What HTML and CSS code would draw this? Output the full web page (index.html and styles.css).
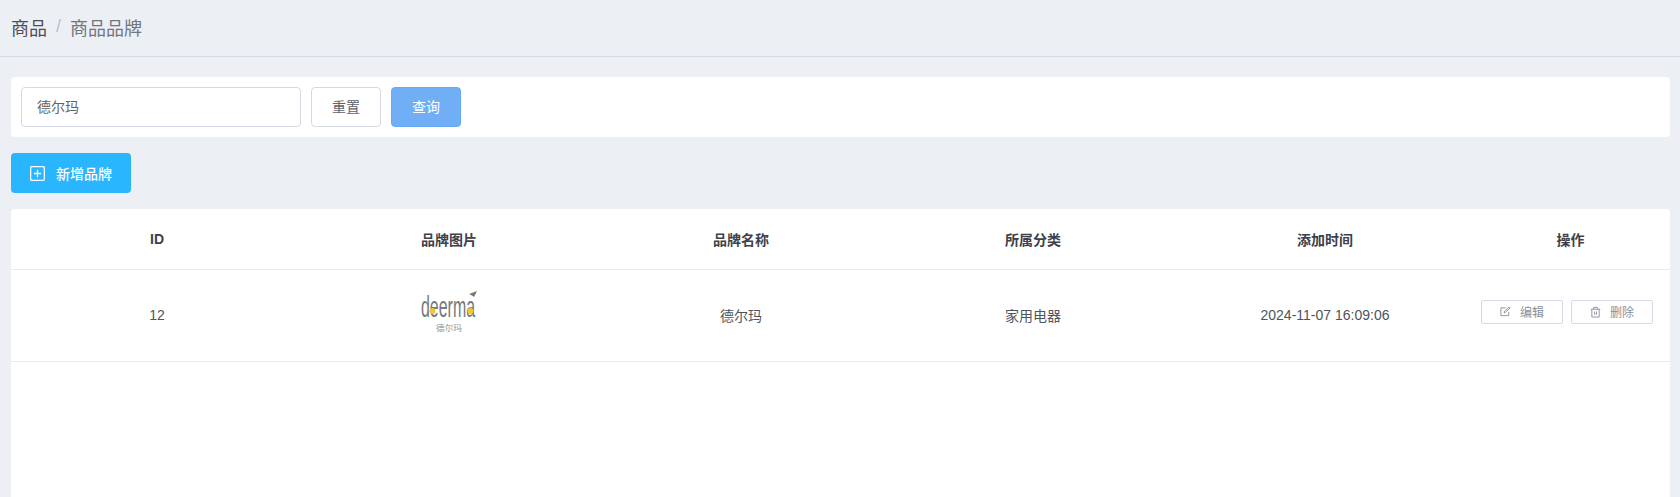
FILE: index.html
```html
<!DOCTYPE html>
<html lang="zh">
<head>
<meta charset="utf-8">
<title>商品品牌</title>
<link rel="stylesheet" href="styles.css">
</head>
<body>
<header class="crumbs">
  <span class="crumb-root">商品</span>
  <span class="crumb-sep">/</span>
  <span class="crumb-leaf">商品品牌</span>
</header>
<main class="content">
  <section class="card search">
    <div class="input">德尔玛</div>
    <button class="btn">重置</button>
    <button class="btn btn-query">查询</button>
  </section>
  <div class="toolbar">
    <button class="btn-add">
      <svg class="add-icon" viewBox="0 0 14 14" width="15" height="15" fill="none" stroke="#fff" stroke-width="1.2"><rect x="0.6" y="0.6" width="12.8" height="12.8" rx="1"/><path d="M7 3.600v6.800M3.600 7h6.800"/></svg>
      <span>新增品牌</span>
    </button>
  </div>
  <section class="card table-card">
    <div class="row head">
      <div>ID</div><div>品牌图片</div><div>品牌名称</div><div>所属分类</div><div>添加时间</div><div>操作</div>
    </div>
    <div class="row body">
      <div>12</div>
      <div class="logo-cell">
        <svg class="logo" viewBox="0 0 60 44" width="60" height="44">
          <path d="M50 5l8-3-3 6-2-1.500z" fill="#777"/>
          <text x="2" y="28" class="logo-word" textLength="54" lengthAdjust="spacingAndGlyphs">deerma</text>
          <circle cx="13.500" cy="22" r="3" fill="#f2c62f"/>
          <circle cx="51.500" cy="22" r="3" fill="#f2c62f"/>
          <text x="17" y="42" class="logo-cn" textLength="26" lengthAdjust="spacingAndGlyphs">德尔玛</text>
        </svg>
      </div>
      <div>德尔玛</div>
      <div>家用电器</div>
      <div>2024-11-07 16:09:06</div>
      <div class="actions">
        <button class="btn-mini">
          <svg viewBox="0 0 12 12" width="11" height="11" fill="none" stroke="#8a8f99" stroke-width="1"><path d="M9.500 6.500v4h-8.500v-8.500h5"/><path d="M4.500 7.500l.5-2 5-4.500 1 1-5 5z"/></svg>
          <span>编辑</span>
        </button>
        <button class="btn-mini">
          <svg viewBox="0 0 12 12" width="11" height="12" fill="none" stroke="#8a8f99" stroke-width="1"><path d="M2 3v8.500h8v-8.500M.8 3h10.400M4 3v-2h4v2M5 5.500v3.500M7 5.500v3.500"/></svg>
          <span>删除</span>
        </button>
      </div>
    </div>
  </section>
</main>
</body>
</html>
```
FILE: styles.css
```css
* { box-sizing: border-box; }
html, body { height: 100%; }
body {
  margin: 0;
  background: #eceff4;
  color: #484c55;
  font-family: "Liberation Sans", "Noto Sans CJK SC", sans-serif;
  font-size: 14px;
  overflow: hidden;
}
button { font-family: inherit; cursor: pointer; }

.crumbs {
  height: 57px;
  padding: 0 11px 3px;
  display: flex;
  align-items: center;
  border-bottom: 1px solid #d5d9e6;
  font-size: 18px;
}
.crumb-root { color: #4a4e57; }
.crumb-sep { margin: 0 9px; color: #b9c0d2; font-size: 18px; }
.crumb-leaf { color: #71757d; }

.content { padding: 20px 10px 0 11px; }
.card { background: #fff; border-radius: 4px; }

.search {
  height: 60px;
  padding: 10px;
  display: flex;
  gap: 10px;
}
.input {
  width: 280px;
  height: 40px;
  padding: 0 15px 2px;
  display: flex;
  align-items: center;
  border: 1px solid #d5d9e6;
  border-radius: 4px;
  color: #5f636b;
}
.btn {
  width: 70px;
  height: 40px;
  padding: 0 0 2px;
  background: #fff;
  border: 1px solid #d5d9e6;
  border-radius: 4px;
  color: #5f636b;
  font-size: 14px;
}
.btn-query {
  background: #70aef6;
  border-color: #66a9f8;
  color: #fff;
}

.toolbar { padding: 16px 0; }
.btn-add {
  width: 120px;
  height: 40px;
  padding: 0 0 0 19px;
  display: flex;
  align-items: center;
  gap: 11px;
  background: #29b6ff;
  border: 0;
  border-radius: 4px;
  color: #fff;
  font-size: 14px;
  font-weight: 500;
}
.add-icon { flex: none; }

.table-card { height: 288px; border-radius: 4px 4px 0 0; }
.row {
  display: grid;
  grid-template-columns: repeat(5, 292px) 1fr;
  align-items: center;
  text-align: center;
  border-bottom: 1px solid #e8eaf0;
}
.head {
  height: 61px;
  font-weight: 700;
  color: #3d414a;
  font-size: 14px;
}
.body { height: 92px; padding-bottom: 1px; color: #4f535c; font-size: 14px; }
.logo-cell { display: flex; justify-content: center; padding-bottom: 9px; }
.logo { display: block; overflow: visible; }
.logo-word {
  font-family: "Liberation Sans", sans-serif;
  font-size: 30px;
  fill: #77797c;
}
.logo-cn {
  font-family: "Noto Sans CJK SC", sans-serif;
  font-size: 8.500px;
  fill: #8f9297;
}
.actions { display: flex; justify-content: flex-start; gap: 8px; padding: 0 0 7px 10px; }
.btn-mini {
  width: 82px;
  height: 24px;
  padding: 0;
  display: flex;
  align-items: center;
  justify-content: center;
  gap: 9px;
  background: #fff;
  border: 1px solid #d5d9e6;
  border-radius: 2px;
  color: #8a8f99;
  font-size: 12px;
}
```
